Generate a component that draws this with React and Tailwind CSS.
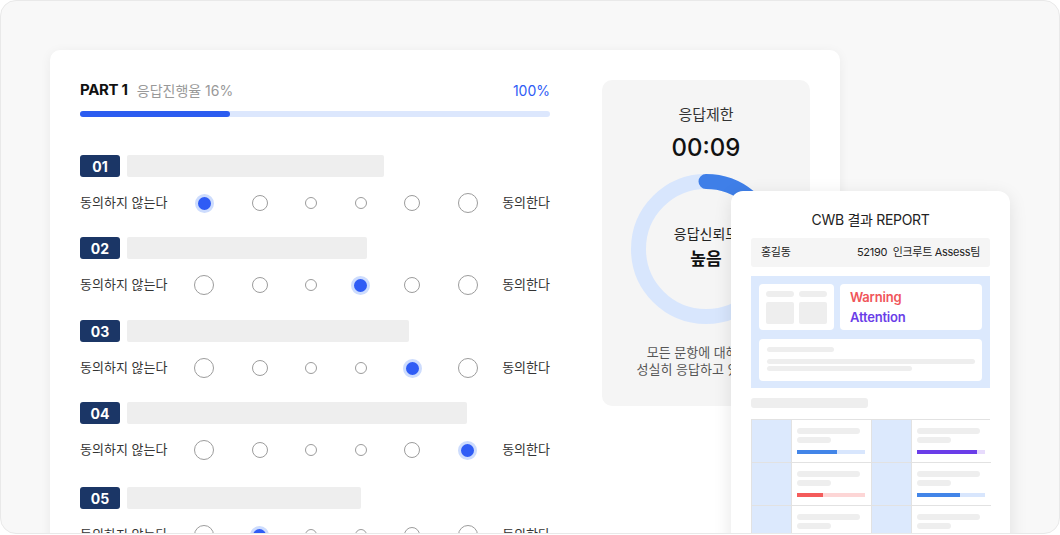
import React from 'react';

const font = { fontFamily: 'Inter, "Noto Sans CJK KR", sans-serif' };

const sizes = [20, 16, 12, 12, 16, 20];

const questions = [
    { no: '01', bar: 'w-[257px]', pick: 0, mb: 'mb-[24px]' },
    { no: '02', bar: 'w-[240px]', pick: 3, mb: 'mb-[25px]' },
    { no: '03', bar: 'w-[282px]', pick: 4, mb: 'mb-[24px]' },
    { no: '04', bar: 'w-[340px]', pick: 5, mb: 'mb-[27px]' },
    { no: '05', bar: 'w-[234px]', pick: 1, mb: 'mb-[24px]' },
];

const sizeClass = {
    20: 'w-[20px] h-[20px]',
    16: 'w-[16px] h-[16px]',
    12: 'w-[12px] h-[12px]',
};

const Radio = ({ size, checked }) => (
    <div className={`${sizeClass[size]} flex items-center justify-center shrink-0`}>
        {checked ? (
            <div className="w-[19px] h-[19px] shrink-0 rounded-full bg-[#2f5cf5] border-[3px] border-[#cddcfd] box-border" />
        ) : (
            <div className={`${sizeClass[size]} rounded-full border border-[#9c9c9c] bg-white box-border`} />
        )}
    </div>
);

const Question = ({ q }) => (
    <div className={q.mb}>
        <div className="flex items-center gap-[7px] h-[22px]">
            <div className="w-[40px] h-[22px] rounded-[3px] bg-[#1b3666] text-white text-[14px] font-bold flex items-center justify-center">
                {q.no}
            </div>
            <div className={`${q.bar} h-[22px] rounded-[2px] bg-[#eeeeee]`} />
        </div>
        <div className="flex items-center h-[20px] mt-[16px] text-[13px] text-[#333]">
            <span className="w-[114px] shrink-0">동의하지 않는다</span>
            <div className="flex items-center gap-[37.6px]">
                {sizes.map((s, i) => (
                    <Radio key={i} size={s} checked={q.pick === i} />
                ))}
            </div>
            <span className="ml-auto">동의한다</span>
        </div>
    </div>
);

const Donut = () => {
    const r = 67.5;
    const c = 2 * Math.PI * r;
    return (
        <svg width="150" height="150" viewBox="0 0 150 150">
            <circle cx="75" cy="75" r={r} fill="none" stroke="#d8e6fd" strokeWidth="15" />
            <circle
                cx="75"
                cy="75"
                r={r}
                fill="none"
                stroke="#3f7fe8"
                strokeWidth="15"
                strokeLinecap="round"
                strokeDasharray={`${c * 0.22} ${c}`}
                transform="rotate(-90 75 75)"
            />
        </svg>
    );
};

const Pill = ({ className }) => <div className={`rounded-full bg-[#eeeeee] ${className}`} />;

const Cell = ({ fill, track, pct }) => (
    <div className="h-[43px] border-l border-b border-[#e2e2e2] bg-white px-[5px] pt-[8px]">
        <Pill className="w-[63px] h-[6px]" />
        <Pill className="w-[34px] h-[6px] mt-[3px]" />
        {fill && (
            <div className={`w-[68px] h-[4px] mt-[7px] ${track}`}>
                <div className={`h-full ${fill}`} style={{ width: `${pct}%` }} />
            </div>
        )}
    </div>
);

const BlueCell = () => <div className="h-[43px] bg-[#dce9fd] border-l border-b border-[#e2e2e2]" />;

const Report = () => (
    <div className="absolute left-[730px] top-[190px] w-[279px] h-[380px] bg-white rounded-[12px] shadow-[0_4px_18px_rgba(0,0,0,0.10)] px-[20px] pt-[20px]">
        <div className="text-center text-[14px] leading-[18px] text-[#222] tracking-[-0.3px]">CWB 결과 REPORT</div>
        <div className="mt-[9px] h-[29px] rounded-[3px] bg-[#f5f5f5] flex items-center justify-between px-[10px] text-[11px] text-[#222] tracking-[-0.3px]">
            <span>홍길동</span>
            <span>52190&nbsp;&nbsp;인크루트 Assess팀</span>
        </div>
        <div className="mt-[9px] h-[112px] bg-[#dce9fd] p-[8px]">
            <div className="flex gap-[6px] h-[46px]">
                <div className="w-[75px] bg-white rounded-[4px] px-[7px] pt-[7px]">
                    <div className="flex gap-[5px]">
                        <Pill className="w-[28px] h-[6px] rounded-[2px]" />
                        <Pill className="w-[28px] h-[6px] rounded-[2px]" />
                    </div>
                    <div className="flex gap-[5px] mt-[5px]">
                        <div className="w-[28px] h-[22px] rounded-[2px] bg-[#eeeeee]" />
                        <div className="w-[28px] h-[22px] rounded-[2px] bg-[#eeeeee]" />
                    </div>
                </div>
                <div className="flex-1 bg-white rounded-[4px] px-[10px] pt-[3px] text-[13px] font-semibold leading-[20px] tracking-[-0.2px]">
                    <div className="text-[#f0555a]">Warning</div>
                    <div className="text-[#6a3de8]">Attention</div>
                </div>
            </div>
            <div className="mt-[9px] h-[42px] bg-white rounded-[4px] px-[8px] pt-[8px]">
                <Pill className="w-[67px] h-[5px]" />
                <Pill className="w-[208px] h-[5px] mt-[7px]" />
                <Pill className="w-[145px] h-[5px] mt-[2px]" />
            </div>
        </div>
        <div className="mt-[10px] w-[117px] h-[10px] rounded-[3px] bg-[#eeeeee]" />
        <div className="mt-[11px] grid grid-cols-[40px_80px_40px_80px] border-t border-r border-[#e2e2e2]">
            <BlueCell />
            <Cell fill="bg-[#4285e8]" track="bg-[#d8e6fd]" pct={59} />
            <BlueCell />
            <Cell fill="bg-[#6a3de8]" track="bg-[#e7dbfc]" pct={88} />
            <BlueCell />
            <Cell fill="bg-[#f45b5b]" track="bg-[#fdd6d6]" pct={38} />
            <BlueCell />
            <Cell fill="bg-[#4285e8]" track="bg-[#d8e6fd]" pct={63} />
            <BlueCell />
            <Cell />
            <BlueCell />
            <Cell />
        </div>
    </div>
);

const App = () => {
    return (
        <div style={font} className="w-[1060px] h-[535px] bg-white">
            <div className="relative w-[1060px] h-[534px] rounded-[16px] border border-[#e9e9e9] bg-[#f8f8f8] overflow-hidden">
                {/* Survey card */}
                <div className="ml-[49px] mt-[49px] w-[790px] h-[520px] bg-white rounded-[10px] shadow-[0_2px_12px_rgba(0,0,0,0.06)] flex pl-[30px] pr-[30px] pt-[30px]">
                    <div className="w-[470px]">
                        <div className="flex items-center h-[20px]">
                            <span className="text-[15px] font-bold text-[#111] tracking-[-0.3px]">PART 1</span>
                            <span className="ml-[9px] text-[14px] text-[#999]">응답진행율 16%</span>
                            <span className="ml-auto text-[14px] text-[#2f5cf5]">100%</span>
                        </div>
                        <div className="mt-[11px] h-[6px] rounded-full bg-[#dce7fd]">
                            <div className="w-[150px] h-full rounded-full bg-[#2b5cf0]" />
                        </div>
                        <div className="mt-[38px]">
                            {questions.map((q) => (
                                <Question key={q.no} q={q} />
                            ))}
                        </div>
                    </div>

                    {/* Timer panel */}
                    <div className="ml-[52px] w-[208px] h-[326px] rounded-[10px] bg-[#f5f5f5] flex flex-col items-center pt-[25px]">
                        <div className="text-[15px] leading-[20px] text-[#333]">응답제한</div>
                        <div className="mt-[8px] text-[24px] leading-[30px] text-[#111] font-medium">00:09</div>
                        <div className="relative mt-[11px] w-[150px] h-[150px]">
                            <Donut />
                            <div className="absolute inset-0 flex flex-col items-center justify-center pb-[4px]">
                                <div className="text-[14px] leading-[20px] text-[#222]">응답신뢰도</div>
                                <div className="mt-[4px] text-[17px] leading-[22px] font-bold text-[#111]">높음</div>
                            </div>
                        </div>
                        <div className="mt-[20px] text-center text-[13px] leading-[17px] text-[#555] whitespace-nowrap">
                            모든 문항에 대해 매우
                            <br />
                            성실히 응답하고 있습니다
                        </div>
                    </div>
                </div>

                <Report />
            </div>
        </div>
    );
};

export default App;
